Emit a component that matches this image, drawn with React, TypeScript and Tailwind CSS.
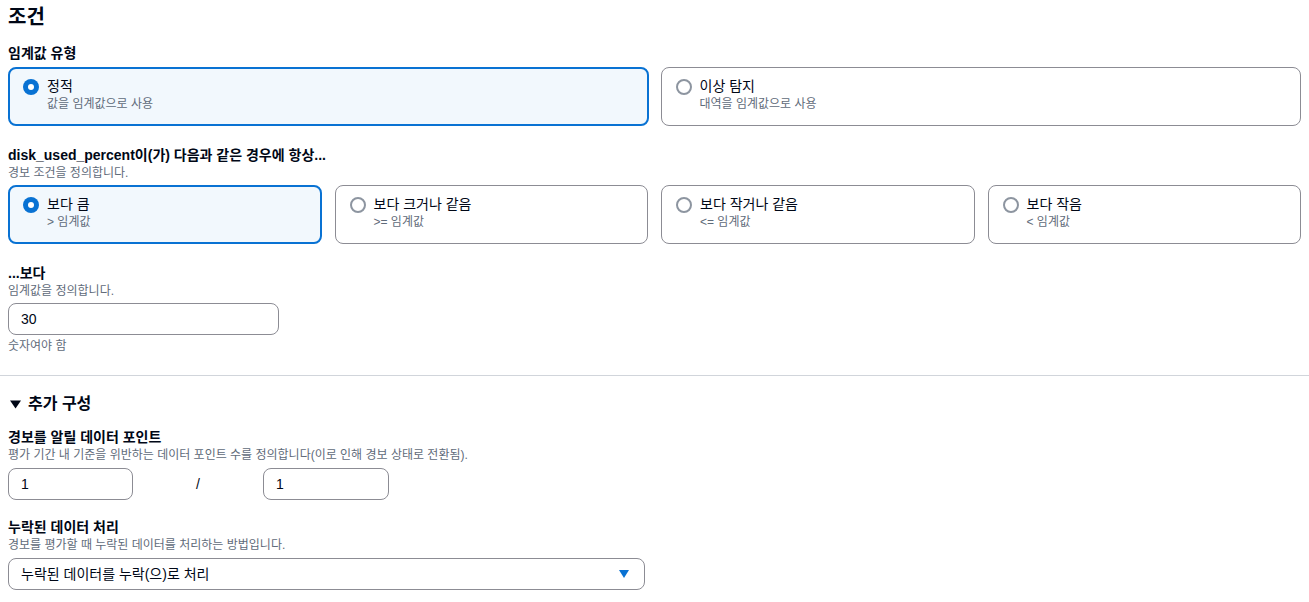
import React from "react";

const font = { fontFamily: '"Liberation Sans", "Noto Sans CJK KR", sans-serif' };

function Radio({ checked }: { checked: boolean }) {
  return checked ? (
    <span className="mt-[3px] flex h-4 w-4 shrink-0 items-center justify-center rounded-full bg-[#0972d3]">
      <span className="h-[6px] w-[6px] rounded-full bg-white" />
    </span>
  ) : (
    <span className="mt-[3px] h-4 w-4 shrink-0 rounded-full border-2 border-[#8d95a0] bg-white" />
  );
}

function Card({ title, desc, checked }: { title: string; desc: string; checked?: boolean }) {
  return (
    <div
      className={
        checked
          ? "flex h-[59px] gap-2 rounded-lg border-2 border-[#0972d3] bg-[#f2f8fd] px-[13px] pt-[7px]"
          : "flex h-[59px] gap-2 rounded-lg border border-[#8c8c94] bg-white px-[14px] pt-[8px]"
      }
    >
      <Radio checked={!!checked} />
      <div className="flex flex-col">
        <span className="text-[14px] leading-[20px] text-[#000716]">{title}</span>
        <span className="text-[12px] leading-[16px] text-[#5f6b7a]">{desc}</span>
      </div>
    </div>
  );
}

function Label({ title, desc }: { title: string; desc?: string }) {
  return (
    <div className="flex flex-col">
      <span className="text-[14px] font-bold leading-[20px] text-[#000716]">{title}</span>
      {desc && <span className="text-[12px] leading-[16px] text-[#5f6b7a]">{desc}</span>}
    </div>
  );
}

function Input({ value, w }: { value: string; w: string }) {
  return (
    <div className={`${w} flex h-[32px] items-center rounded-lg border border-[#8c8c94] bg-white px-3 text-[14px] text-[#000716]`}>
      {value}
    </div>
  );
}

export default function App() {
  return (
    <div className="min-h-screen bg-white" style={font}>
      <div className="px-2 pt-[3px]">
        <h2 className="text-[20px] font-bold leading-[28px] text-[#000716]">조건</h2>

        <div className="mt-[12px]">
          <Label title="임계값 유형" />
          <div className="mt-[4px] grid grid-cols-2 gap-3">
            <Card title="정적" desc="값을 임계값으로 사용" checked />
            <Card title="이상 탐지" desc="대역을 임계값으로 사용" />
          </div>
        </div>

        <div className="mt-[19px]">
          <Label title="disk_used_percent이(가) 다음과 같은 경우에 항상..." desc="경보 조건을 정의합니다." />
          <div className="mt-[4px] grid grid-cols-4 gap-[13px]">
            <Card title="보다 큼" desc="> 임계값" checked />
            <Card title="보다 크거나 같음" desc=">= 임계값" />
            <Card title="보다 작거나 같음" desc="<= 임계값" />
            <Card title="보다 작음" desc="< 임계값" />
          </div>
        </div>

        <div className="mt-[19px]">
          <Label title="...보다" desc="임계값을 정의합니다." />
          <div className="mt-[4px]">
            <Input value="30" w="w-[271px]" />
          </div>
          <div className="mt-[3px] text-[12px] leading-[16px] text-[#5f6b7a]">숫자여야 함</div>
        </div>
      </div>

      <div className="mt-[21px] border-t border-[#d1d5db]" />

      <div className="px-2">
        <div className="mt-[17px] flex items-center gap-[7px] text-[16px] font-bold leading-[22px] text-[#000716]">
          <svg width="11" height="9" viewBox="0 0 11 9" className="ml-[2px]">
            <path d="M0 0.5 L11 0.5 L5.5 8.5 Z" fill="#000716" />
          </svg>
          <span>추가 구성</span>
        </div>

        <div className="mt-[12px]">
          <Label title="경보를 알릴 데이터 포인트" desc="평가 기간 내 기준을 위반하는 데이터 포인트 수를 정의합니다(이로 인해 경보 상태로 전환됨)." />
          <div className="mt-[5px] flex items-center">
            <Input value="1" w="w-[125px]" />
            <span className="w-[130px] text-center text-[14px] text-[#000716]">/</span>
            <Input value="1" w="w-[126px]" />
          </div>
        </div>

        <div className="mt-[17px]">
          <Label title="누락된 데이터 처리" desc="경보를 평가할 때 누락된 데이터를 처리하는 방법입니다." />
          <div className="mt-[5px] flex h-[32px] w-[637px] items-center justify-between rounded-lg border border-[#8c8c94] bg-white pl-3 pr-[14px] text-[14px] text-[#000716]">
            <span>누락된 데이터를 누락(으)로 처리</span>
            <svg width="12" height="10" viewBox="0 0 12 10">
              <path d="M1 1 L11 1 L6 9 Z" fill="#0972d3" />
            </svg>
          </div>
        </div>
      </div>
    </div>
  );
}
